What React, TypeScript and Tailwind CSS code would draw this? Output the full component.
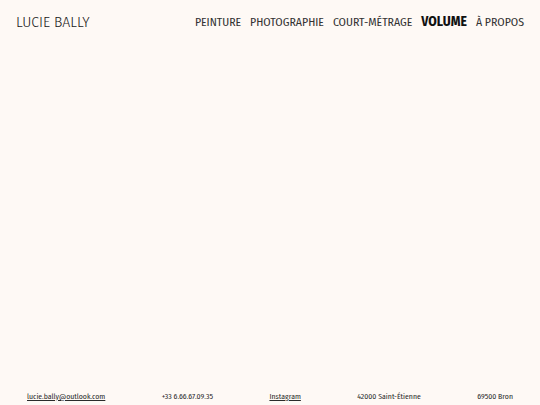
const NAV = [
  { label: "PEINTURE", active: false },
  { label: "PHOTOGRAPHIE", active: false },
  { label: "COURT-MÉTRAGE", active: false },
  { label: "VOLUME", active: true },
  { label: "À PROPOS", active: false },
];

export default function App() {
  return (
    <div className="h-[405px] w-full bg-[#fef9f5] text-[#2b2b2b] flex flex-col font-['Fira_Sans_Condensed','Fira_Sans','Open_Sans',sans-serif]">
      <header className="flex items-center justify-between px-4 pt-[12px]">
        <a href="#" className="text-[15.5px] leading-[18px] font-light text-[#1a1a1a]">
          LUCIE BALLY
        </a>
        <nav className="flex items-center gap-[9px] text-[11.75px] leading-[18px] pt-[1px] text-[#333]">
          {NAV.map((n) => (
            <a
              key={n.label}
              href="#"
              className={n.active ? "font-bold text-[13.5px] text-[#111]" : ""}
            >
              {n.label}
            </a>
          ))}
        </nav>
      </header>

      <main className="flex-1" />

      <footer className="flex items-center justify-between px-[27px] pb-[2px] text-[7.75px] leading-[12px]">
        <a href="#" className="underline">lucie.bally@outlook.com</a>
        <span>+33 6.66.67.09.35</span>
        <a href="#" className="underline">Instagram</a>
        <span>42000 Saint-Étienne</span>
        <span>69500 Bron</span>
      </footer>
    </div>
  );
}
